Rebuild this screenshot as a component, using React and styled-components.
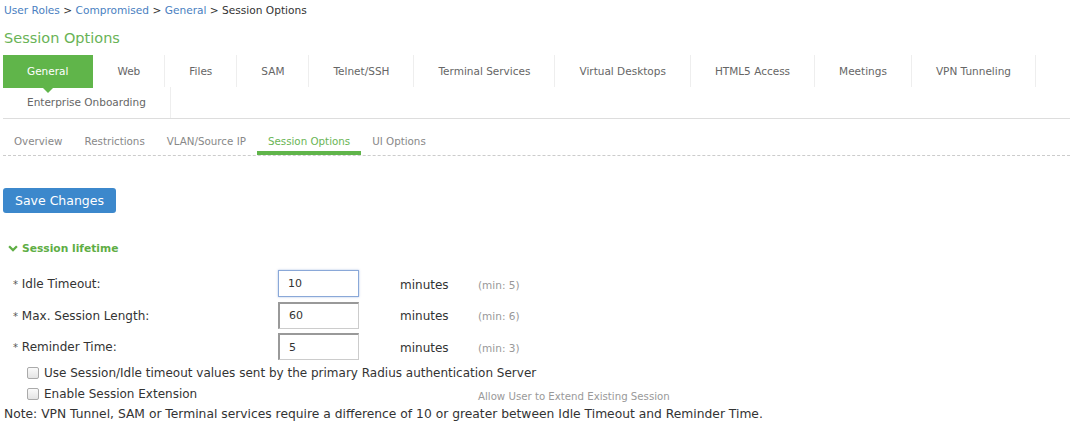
import React from 'react'
import styled, { createGlobalStyle } from 'styled-components'

const GlobalStyle = createGlobalStyle`
  html, body {
    margin: 0;
    padding: 0;
    background: #fff;
  }
  body {
    font-family: "DejaVu Sans", Verdana, sans-serif;
    font-size: 11px;
    color: #333;
  }
`;

const mainTabs = ['General', 'Web', 'Files', 'SAM', 'Telnet/SSH', 'Terminal Services', 'Virtual Desktops', 'HTML5 Access', 'Meetings', 'VPN Tunneling']
const subTabs = ['Overview', 'Restrictions', 'VLAN/Source IP', 'Session Options', 'UI Options']

const fields = [
  { label: 'Idle Timeout:', value: '10', min: 5, focused: true },
  { label: 'Max. Session Length:', value: '60', min: 6 },
  { label: 'Reminder Time:', value: '5', min: 3 },
]

const App = () => {
  return (
    <Page>
      <GlobalStyle />
      <Breadcrumb>
        <a href='#'>User Roles</a> &gt; <a href='#'>Compromised</a> &gt; <a href='#'>General</a> &gt; Session Options
      </Breadcrumb>
      <Title>Session Options</Title>

      <TabBar>
        {mainTabs.map((t, i) => (
          <Tab key={t} $active={i === 0}>{t}</Tab>
        ))}
        <TabBreak />
        <Tab $second>Enterprise Onboarding</Tab>
      </TabBar>

      <SubTabBar>
        {subTabs.map(t => (
          <SubTab key={t} $active={t === 'Session Options'}>{t}</SubTab>
        ))}
      </SubTabBar>

      <SaveButton>Save Changes</SaveButton>

      <SectionHeader>
        <svg width='10' height='8' viewBox='0 0 10 8'>
          <path d='M0.3 2 L1.9 0.4 L5 3.5 L8.1 0.4 L9.7 2 L5 6.7 Z' fill='#5fae45' />
        </svg>
        Session lifetime
      </SectionHeader>

      <Form>
        {fields.map(f => (
          <React.Fragment key={f.label}>
            <Label><Star>*</Star> {f.label}</Label>
            <Cell><Input defaultValue={f.value} $focused={f.focused} /></Cell>
            <Unit>minutes</Unit>
            <Hint>(min: {f.min})</Hint>
          </React.Fragment>
        ))}
        <CheckRow $span>
          <Box /> Use Session/Idle timeout values sent by the primary Radius authentication Server
        </CheckRow>
        <CheckRow>
          <Box /> Enable Session Extension
        </CheckRow>
        <SideNote>Allow User to Extend Existing Session</SideNote>
      </Form>

      <Note>Note: VPN Tunnel, SAM or Terminal services require a difference of 10 or greater between Idle Timeout and Reminder Time.</Note>
    </Page>
  )
}

const Page = styled.div`
  padding: 3px 0 0 3px;
`;

const Breadcrumb = styled.div`
  font-size: 10.6px;
  line-height: 14px;
  padding-left: 1px;
  color: #333;
  a {
    color: #4a7fc1;
    text-decoration: none;
  }
`;

const Title = styled.h1`
  margin: 12px 0 0 1px;
  font-size: 14.5px;
  line-height: 18px;
  font-weight: normal;
  color: #69b356;
`;

const TabBar = styled.div`
  display: flex;
  flex-wrap: wrap;
  margin-top: 8px;
  border-bottom: 1px solid #ddd;
`;

const TabBreak = styled.div`
  flex-basis: 100%;
  height: 0;
`;

const Tab = styled.div`
  position: relative;
  height: ${({ $active, $second }) => ($active ? '33px' : $second ? '31px' : '32px')};
  margin-bottom: ${({ $active }) => ($active ? '-1px' : '0')};
  padding: 0 24px;
  line-height: ${({ $second }) => ($second ? '31px' : '33px')};
  font-size: 10.5px;
  white-space: nowrap;
  color: ${({ $active }) => ($active ? '#fff' : '#666')};
  background: ${({ $active }) => ($active ? '#60b54a' : 'transparent')};
  border-right: 1px solid ${({ $active }) => ($active ? '#60b54a' : '#eee')};
  ${({ $active }) => $active && `
    &::after {
      content: '';
      position: absolute;
      left: 50%;
      bottom: -5px;
      margin-left: -5px;
      border-left: 5px solid transparent;
      border-right: 5px solid transparent;
      border-top: 5px solid #60b54a;
    }
  `}
`;

const SubTabBar = styled.div`
  display: flex;
  margin-top: 14px;
  border-bottom: 1px dashed #ccc;
`;

const SubTab = styled.div`
  padding: 0 11px;
  height: 22px;
  line-height: 16px;
  font-size: 10.3px;
  color: ${({ $active }) => ($active ? '#6ab556' : '#888')};
  border-bottom: 4px solid ${({ $active }) => ($active ? '#60b54a' : 'transparent')};
  box-sizing: border-box;
`;

const SaveButton = styled.button`
  display: block;
  margin-top: 32px;
  width: 113px;
  height: 25px;
  border: none;
  border-radius: 3px;
  background: #3c88cc;
  color: #fff;
  font-family: "DejaVu Sans", Verdana, sans-serif;
  font-size: 12.5px;
  padding: 0;
`;

const SectionHeader = styled.div`
  display: flex;
  align-items: center;
  gap: 4px;
  margin: 29px 0 0 5px;
  font-size: 10.7px;
  font-weight: bold;
  color: #5fae45;
  line-height: 14px;
`;

const Form = styled.div`
  display: grid;
  grid-template-columns: 265px 122px 78px 1fr;
  align-items: center;
  margin: 12px 0 0 10px;
  font-size: 12px;
`;

const Label = styled.div`
  color: #333;
  height: 31.5px;
  line-height: 33px;
`;

const Star = styled.span`
  color: #555;
  font-size: 10px;
`;

const Cell = styled.div`
  height: 31.5px;
  display: flex;
  align-items: center;
`;

const Input = styled.input`
  box-sizing: border-box;
  width: 81px;
  height: 27px;
  padding: 0 9px;
  font-family: "DejaVu Sans", Verdana, sans-serif;
  font-size: 11px;
  color: #333;
  outline: none;
  border: 1px solid ${({ $focused }) => ($focused ? '#8aa8d8' : '#ccc')};
  ${({ $focused }) => $focused
    ? 'box-shadow: 0 0 2px rgba(90,130,200,0.5);'
    : 'border-top: 2px solid #999; border-left: 2px solid #999;'}
`;

const Unit = styled.div`
  color: #333;
  font-size: 12px;
  padding-top: 2px;
`;

const Hint = styled.div`
  color: #999;
  font-size: 10.5px;
  padding-top: 2px;
`;

const CheckRow = styled.div`
  grid-column: ${({ $span }) => ($span ? '1 / -1' : '1 / 4')};
  display: flex;
  align-items: center;
  gap: 5px;
  padding-left: 14px;
  height: 21px;
  color: #333;
  font-size: 12px;
`;

const Box = styled.span`
  display: inline-block;
  width: 10px;
  height: 10px;
  border: 1px solid #aaa;
  border-radius: 2px;
  background: linear-gradient(#fafafa, #e4e4e4);
`;

const SideNote = styled.div`
  color: #999;
  font-size: 10.2px;
  padding-top: 4px;
`;

const Note = styled.div`
  margin: 2px 0 0 1px;
  font-size: 12.3px;
  color: #333;
`;

export default App
